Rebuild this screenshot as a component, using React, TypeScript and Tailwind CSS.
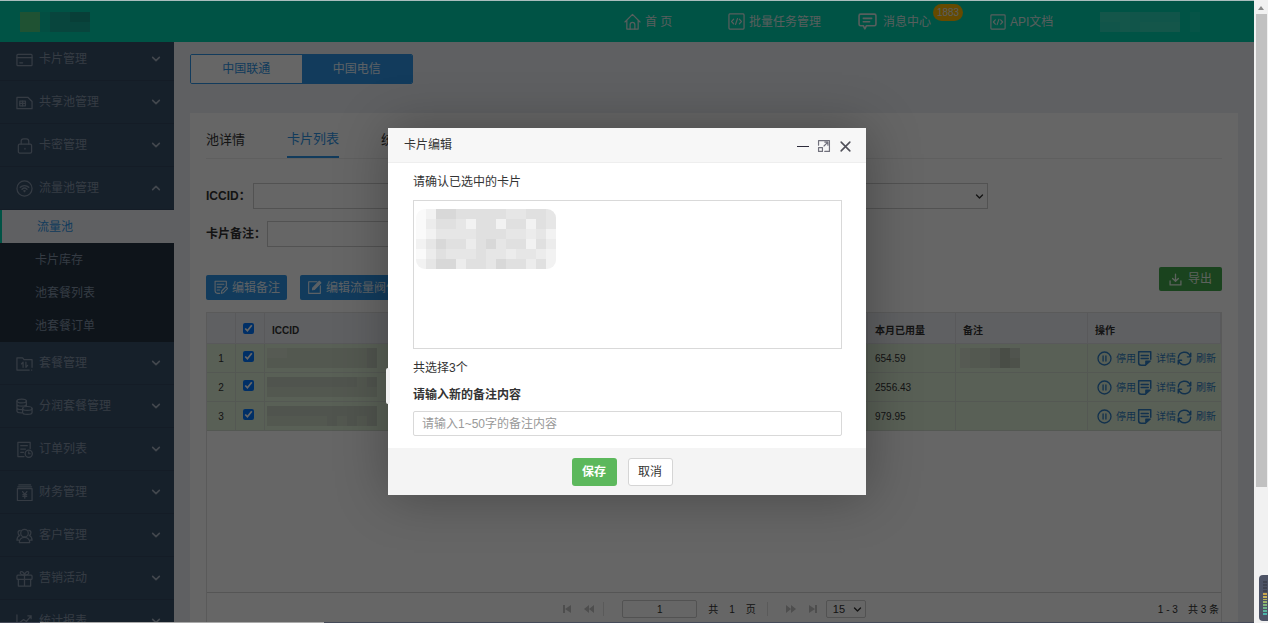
import type { ReactNode } from "react";

type IconProps = { children: ReactNode; className?: string };

function Icon({ children, className = "size-[17px]" }: IconProps) {
  return (
    <svg
      viewBox="0 0 18 18"
      fill="none"
      stroke="currentColor"
      strokeWidth="1.3"
      strokeLinecap="round"
      strokeLinejoin="round"
      aria-hidden="true"
      className={`shrink-0 ${className}`}
    >
      {children}
    </svg>
  );
}

const icons = {
  card: (
    <>
      <rect x="1" y="3.5" width="16" height="12" rx="1" />
      <path d="M1 7h16M4 12.5h3" />
    </>
  ),
  sim: (
    <>
      <path d="M1 3.5h11.5L17 8v7.5H1z" />
      <rect x="4" y="7.5" width="6" height="5" />
      <path d="M7 7.5v5M4 10h6" />
    </>
  ),
  lock: (
    <>
      <rect x="2.5" y="7.5" width="14" height="9.5" rx="1.5" />
      <path d="M5.5 7.5V4.5a2.5 2.5 0 0 1 2.5-2.5h3a2.5 2.5 0 0 1 2.5 2.5v3M9.5 12v.8" />
    </>
  ),
  wifi: (
    <>
      <circle cx="9" cy="9" r="8" />
      <path d="M4.5 7.8a6.4 6.4 0 0 1 9 0M6.4 9.8a3.7 3.7 0 0 1 5.2 0" strokeWidth="1.5" />
      <path d="M7.4 11.3a2.3 2.3 0 0 1 3.2 0L9 13.2z" fill="currentColor" stroke="none" />
    </>
  ),
  folder: (
    <>
      <path d="M17 13V5H8.5L7 3H1v13h13M16.5 16h.2" />
      <path d="M7.5 13V7.5L5.8 9.5M10.5 7.5V13l1.8-2" />
    </>
  ),
  coins: (
    <>
      <ellipse cx="6" cy="3.2" rx="5" ry="2" />
      <path d="M1 3.2v10.5c0 1.2 2 2 5 2M11 3.2v5M1 6.7c0 1.2 2 2 5 2s5-.8 5-2M1 10.2c0 1.2 2 2 5 2" />
      <ellipse cx="12" cy="11" rx="5" ry="2" />
      <path d="M7 11v4.3c0 1.2 2 2 5 2s5-.8 5-2V11" />
    </>
  ),
  order: (
    <>
      <path d="M15 8V1.5H2v15h6.5M5 5h7M5 8.5h5M5 12h3" />
      <circle cx="13.5" cy="13.5" r="3.8" />
      <path d="M13.5 11.5v2h1.5" />
    </>
  ),
  finance: (
    <>
      <rect x="1.5" y="5" width="15.5" height="12.5" />
      <path d="M3 1h12.5M2 3h14.5M7 8l2.3 3L11.5 8M9.3 11v4M7.3 11.3h4M7.3 13.2h4" />
    </>
  ),
  users: (
    <>
      <circle cx="9" cy="6.5" r="4" />
      <path d="M3.5 16.5c0-3.5 2.5-5.5 5.5-5.5s5.5 2 5.5 5.5zM4.5 3.5C1.5 3.5 1.5 8 4 9c-2 .8-3 2.500-3 5h2M13.5 3.5c3 0 3 4.500.5 5.500 2 .8 3 2.500 3 5h-2" />
    </>
  ),
  gift: (
    <>
      <rect x="1" y="5.5" width="16" height="4.5" rx="1" />
      <path d="M2.5 10v7h13v-7M9 5.5V17M9 5.5C7 5.5 4 4.5 4.5 2.5S8.5 2 9 5.5c.5-3.500 4-5 4.500-3S11 5.500 9 5.500" />
    </>
  ),
  chart: <path d="M1 2v15h16M4 14v-4l4-3 3 2 5-6M12.5 3H16v3M8 14v-2M12 14v-2M16 14v-4" />,
  home: (
    <>
      <path d="M1 9.5 9 1.5l8 8M3 8v9h12V8" />
      <path d="M6.5 17v-4.500a2.500 2.500 0 0 1 5 0V17" />
    </>
  ),
  code: (
    <>
      <rect x="1" y="1" width="16" height="16" rx="1" />
      <path d="M6 6.5 3.8 9 6 11.5M12 6.5 14.2 9 12 11.5M10 6l-2 6" />
    </>
  ),
  message: (
    <path d="M2.5 2h13a1.5 1.5 0 0 1 1.5 1.5v8a1.5 1.5 0 0 1-1.5 1.5H8l-1.5 3L5 13H2.5A1.5 1.5 0 0 1 1 11.5v-8A1.5 1.5 0 0 1 2.500 2zM5 6h8M5 9.300h6" strokeWidth="1.5" />
  ),
  note: (
    <>
      <path d="M16 7V1.5H2.5V13c0 2 1 3 3 3H8M5 5h8M5 8.5h5M5 12h3" />
      <path d="m10 16 .5-2.800L15.500 8l2 2-5 5.300z" />
    </>
  ),
  pencil: (
    <>
      <path d="M12 2H2v14h14V7" />
      <path d="m6.5 11.8.4-2.300L14.800 1.500l1.900 1.900-8 8z" fill="currentColor" />
    </>
  ),
  download: <path d="M9 1.5v9.500M5 7.500l4 4 4-4M1.500 11v5.500h15V11" strokeWidth="1.8" />,
  pause: (
    <>
      <circle cx="9" cy="9" r="7.8" strokeWidth="1.6" />
      <path d="M7.3 6v6M10.7 6v6" strokeWidth="1.6" />
    </>
  ),
  detail: (
    <>
      <path d="M16.5 10V1H2v13c0 2 1 3 3 3h5M5 5.500h8.500M5 9h8.500" strokeWidth="1.8" />
      <path d="M10.5 12H16l-5.500 5z" fill="currentColor" />
    </>
  ),
  refresh: (
    <path d="M16.5 2.500v4.500h-4M1.500 15.500V11h4M16 6.500A7.400 7.400 0 0 0 1.600 8.500M2 11.500a7.400 7.400 0 0 0 14.400-2" strokeWidth="1.7" />
  ),
  down: <path d="m3 6 6 6 6-6" strokeWidth="2.8" />,
  up: <path d="m3 12 6-6 6 6" strokeWidth="2.8" />,
  expand: (
    <>
      <path d="M2 8V2h14v14h-6M9 9l5-5M10 4h4v4" strokeWidth="1.5" />
      <rect x="2" y="11" width="5" height="5" strokeWidth="1.5" />
    </>
  ),
  close: <path d="m3 3 12 12M15 3 3 15" strokeWidth="2.2" />,
};

type MosaicProps = { rows: string[]; palette: Record<string, string>; label: string; className?: string };

/* Blocks of 10px that hide a private value; "." leaves a block empty. */
function Mosaic({ rows, palette, label, className = "" }: MosaicProps) {
  const width = rows[0].length * 10;
  const height = rows.length * 10;
  return (
    <svg width={width} height={height} role="img" aria-label={label} shapeRendering="crispEdges" className={`block shrink-0 ${className}`}>
      {rows.flatMap((row, y) =>
        row.split("").map((c, x) =>
          c === "." ? null : <rect key={`${x}-${y}`} x={x * 10} y={y * 10} width="10" height="10" fill={palette[c]} />,
        ),
      )}
    </svg>
  );
}

const greys = { a: "#fafafa", b: "#f2f2f2", c: "#ececec", d: "#e6e6e6", e: "#e0e0e0", f: "#d8d8d8" };
const greens = { a: "#d6e2d0", b: "#d0dbc9", c: "#c8d3c2", d: "#c0cbba", e: "#b6c0b0" };

const submenu = ["卡片库存", "池套餐列表", "池套餐订单"];
const menuTop = [
  { icon: icons.card, label: "卡片管理" },
  { icon: icons.sim, label: "共享池管理" },
  { icon: icons.lock, label: "卡密管理" },
  { icon: icons.wifi, label: "流量池管理", open: true },
];
const menuBottom = [
  { icon: icons.folder, label: "套餐管理" },
  { icon: icons.coins, label: "分润套餐管理" },
  { icon: icons.order, label: "订单列表" },
  { icon: icons.finance, label: "财务管理" },
  { icon: icons.users, label: "客户管理" },
  { icon: icons.gift, label: "营销活动" },
  { icon: icons.chart, label: "统计报表" },
];

function MenuItem({ icon, label, open = false }: { icon: ReactNode; label: string; open?: boolean }) {
  return (
    <li>
      <a href="#" className="flex h-[43px] items-center border-b border-[#33485f] pr-[13px] pl-4 text-xs text-[#8495a9]">
        <Icon>{icon}</Icon>
        <span className="ml-1.5 flex-1">{label}</span>
        <Icon className="size-[10px] text-[#a5b2c1]">{open ? icons.up : icons.down}</Icon>
      </a>
    </li>
  );
}

function Sidebar() {
  return (
    <nav aria-label="主菜单" className="w-[174px] shrink-0 overflow-hidden bg-[#39506a]">
      <ul className="-mt-1">
        {menuTop.map((m) => (
          <MenuItem key={m.label} {...m} />
        ))}
        <li>
          <ul className="bg-[#233241] text-xs">
            <li>
              <a href="#" className="flex h-[33px] items-center border-l-2 border-[#00cfad] bg-[#eef0f5] pl-[35px] text-[#2d94e6]">
                流量池
              </a>
            </li>
            {submenu.map((label) => (
              <li key={label}>
                <a href="#" className="flex h-[33px] items-center pl-[35px] text-[#8495a9]">
                  {label}
                </a>
              </li>
            ))}
          </ul>
        </li>
        {menuBottom.map((m) => (
          <MenuItem key={m.label} {...m} />
        ))}
      </ul>
    </nav>
  );
}

function Header() {
  return (
    <header className="flex h-[42px] shrink-0 items-center bg-[#00cfad] pt-px pl-5 text-xs text-[#dcebe8]">
      <Mosaic label="标志" rows={["aabccdd", "aabcccc"]} palette={{ a: "#4fcc80", b: "#08c2a6", c: "#15ad98", d: "#159f8d" }} />
      <nav aria-label="顶部导航" className="ml-auto flex items-center pr-[54px]">
        <a href="#" className="flex w-[104px] items-center gap-1">
          <Icon>{icons.home}</Icon>首 页
        </a>
        <a href="#" className="flex w-[130px] items-center gap-1">
          <Icon>{icons.code}</Icon>批量任务管理
        </a>
        <a href="#" className="relative flex w-[132px] items-center gap-1.5">
          <Icon className="size-[19px]">{icons.message}</Icon>消息中心
          <span className="absolute -top-2 left-[75px] flex h-[17px] w-[30px] items-center justify-center rounded-full bg-[#ffb800] text-[10px]">
            1883
          </span>
        </a>
        <a href="#" className="flex w-[110px] items-center gap-1">
          <Icon className="size-4">{icons.code}</Icon>API文档
        </a>
        <Mosaic label="账号" rows={["aaabbbbb.d", "bbabaaaa.d"]} palette={{ a: "#32d6ba", b: "#2bd5b8", d: "#10d2b1" }} />
      </nav>
    </header>
  );
}

const usage = ["654.59", "2556.43", "979.95"];
const idBlocks = [
  ["aabbbbbbbbc", "bbbbbbbbbbc"],
  ["cccccccccbc", "bbbbbbbbbbb"],
  ["ccccccccccc", "bbbbbbcbcbc"],
];
const actions = [
  { icon: icons.pause, label: "停用" },
  { icon: icons.detail, label: "详情" },
  { icon: icons.refresh, label: "刷新" },
];

function CardTable() {
  const head = "border-r border-b border-[#dedfe3] px-[7px] pt-1 text-left font-bold";
  const cell = "border-r border-b border-[#d3dccf] px-[7px]";
  return (
    <table className="w-full table-fixed border-separate border-spacing-0 text-[10px] text-[#333]">
      <colgroup>
        <col className="w-[29px]" />
        <col className="w-[29px]" />
        <col />
        <col className="w-[88px]" />
        <col className="w-[132px]" />
        <col className="w-[133px]" />
      </colgroup>
      <thead>
        <tr className="h-[31px] bg-[#eef0f5]">
          <th className={head} aria-label="序号" />
          <th className="border-r border-b border-[#dedfe3] px-[7px]">
            <input type="checkbox" defaultChecked aria-label="全选" className="block size-[11px]" />
          </th>
          <th className={head}>ICCID</th>
          <th className={head}>本月已用量</th>
          <th className={head}>备注</th>
          <th className={head}>操作</th>
        </tr>
      </thead>
      <tbody>
        {usage.map((value, i) => (
          <tr key={value} className="h-[29px] bg-[#dff0d8]">
            <td className={`${cell} text-center`}>{i + 1}</td>
            <td className="border-r border-b border-[#d3dccf] px-[7px] pb-1">
              <input type="checkbox" defaultChecked aria-label={`选择第${i + 1}行`} className="block size-[11px]" />
            </td>
            <td className="border-r border-b border-[#d3dccf] px-0.5">
              <Mosaic label="ICCID" rows={idBlocks[i]} palette={greens} />
            </td>
            <td className={cell}>{value}</td>
            <td className="border-r border-b border-[#d3dccf] px-1">
              {i === 0 && <Mosaic label="备注" rows={["abbcec", "abbced"]} palette={greens} />}
            </td>
            <td className="border-b border-[#d3dccf] pl-[9px]">
              <div className="flex">
                {actions.map((a) => (
                  <a key={a.label} href="#" className="flex w-10 shrink-0 items-center gap-1 whitespace-nowrap text-[#2f7cc0]">
                    <Icon className="size-[15px]">{a.icon}</Icon>
                    {a.label}
                  </a>
                ))}
              </div>
            </td>
          </tr>
        ))}
      </tbody>
    </table>
  );
}

function PagerArrow({ label, path }: { label: string; path: string }) {
  return (
    <button type="button" aria-label={label} className="text-[#c2c2c2]">
      <svg viewBox="0 0 10 10" className="size-[10px]" fill="currentColor" aria-hidden="true">
        <path d={path} />
      </svg>
    </button>
  );
}

function Pager() {
  return (
    <div className="relative flex h-[31px] shrink-0 items-center justify-center border-t border-[#d5d5d5] pt-0.5 text-[10px] text-[#333]">
      <div className="flex items-center">
        <div className="flex gap-3">
          <PagerArrow label="首页" path="M1 1h2v8H1zM9 1v8L3 5z" />
          <PagerArrow label="上一页" path="M5 1v8L0 5zM10 1v8L5 5z" />
        </div>
        <span className="mr-[18px] ml-[9px] h-[14px] border-l border-[#e2e2e2]" />
        <input aria-label="页码" defaultValue="1" className="h-[18px] w-[75px] rounded-xs border border-[#ccc] text-center" />
        <span className="ml-[11px] flex gap-[11px]">
          <span>共</span>
          <span>1</span>
          <span>页</span>
        </span>
        <span className="mr-[18px] ml-[11px] h-[14px] border-l border-[#e2e2e2]" />
        <div className="mr-2 flex gap-3">
          <PagerArrow label="下一页" path="M0 1v8l5-4zM5 1v8l5-4z" />
          <PagerArrow label="末页" path="M7 1h2v8H7zM1 1v8l6-4z" />
        </div>
        <div className="relative flex items-center">
          <select aria-label="每页条数" className="h-[18px] w-10 appearance-none rounded-xs border border-[#ccc] pl-1.5 text-[11px]">
            <option>15</option>
          </select>
          <Icon className="pointer-events-none absolute right-1 size-[9px]">{icons.down}</Icon>
        </div>
      </div>
      <span className="absolute right-0.5 flex gap-2.5">
        <span>1 - 3</span>
        <span>共 3 条</span>
      </span>
    </div>
  );
}

function Content() {
  const field = "h-[26px] border border-[#ccc] bg-white";
  const blue = "flex h-[25px] items-center gap-1 rounded-xs bg-[#2d94e6] px-[7px] text-xs whitespace-nowrap text-[#e6f2fc]";
  return (
    <main className="flex min-w-0 flex-1 flex-col bg-[#eef0f5] px-4 pt-3">
      <div className="flex h-[30px] w-[223px] shrink-0 overflow-hidden rounded-xs border border-[#2d94e6] text-xs">
        <button type="button" className="flex-1 bg-white text-[#2d94e6]">中国联通</button>
        <button type="button" className="flex-1 bg-[#2d94e6] text-[#e6f2fc]">中国电信</button>
      </div>
      <section className="mt-[29px] flex min-h-0 flex-1 flex-col bg-white px-4">
        <nav aria-label="流量池" className="flex h-[46px] shrink-0 gap-[42px] border-b border-[#eee] pt-2 text-[13px] text-[#333]">
          <a href="#" className="flex items-center">池详情</a>
          <a href="#" className="flex items-center border-b-2 border-[#2d94e6] text-[#2d94e6]">卡片列表</a>
          <a href="#" className="flex items-center">统计</a>
        </nav>
        <form className="mt-6 text-xs font-bold text-[#333]">
          <div className="flex items-center">
            <label htmlFor="iccid" className="w-[47px]">ICCID：</label>
            <input id="iccid" className={`${field} w-[300px]`} />
            <div className="relative ml-[134px] flex w-[301px] items-center">
              <select aria-label="状态" className={`${field} w-full appearance-none`} />
              <Icon className="pointer-events-none absolute right-1 size-[9px]">{icons.down}</Icon>
            </div>
          </div>
          <div className="mt-3 flex items-center">
            <label htmlFor="remark" className="w-[61px]">卡片备注：</label>
            <input id="remark" className={`${field} w-[286px]`} />
          </div>
        </form>
        <div className="mt-5 flex h-[45px] shrink-0 items-start">
          <div className="mt-2 flex gap-[13px]">
            <button type="button" className={blue}>
              <Icon className="size-[15px]">{icons.note}</Icon>编辑备注
            </button>
            <button type="button" className={blue}>
              <Icon className="size-[15px]">{icons.pencil}</Icon>编辑流量阀值
            </button>
          </div>
          <button type="button" className="ml-auto flex h-6 items-center gap-1.5 rounded-xs bg-[#41a84b] px-2.5 text-xs text-[#e6f5e8]">
            <Icon className="size-[13px]">{icons.download}</Icon>导出
          </button>
        </div>
        <div className="flex min-h-0 flex-1 flex-col border border-b-0 border-[#e2e2e2]">
          <div className="min-h-0 flex-1 overflow-hidden">
            <CardTable />
          </div>
          <Pager />
        </div>
      </section>
    </main>
  );
}

const selectedBlocks = [
  "abffeeeeeddeed",
  "aceedbeebeebed",
  "abddddeeeddcdb",
  "bdfeecefdeebec",
  "acedddeddcddcb",
  "bdffceedfeeceb",
];

function EditDialog() {
  return (
    <div role="dialog" aria-labelledby="dialog-title" className="relative w-[478px] bg-white text-xs text-[#333] shadow-[1px_1px_50px_rgba(0,0,0,0.3)]">
      <span className="absolute top-[240px] -left-0.5 h-9 w-1 rounded-xs bg-[#f2f2f2]" />
      <div className="flex h-[35px] items-center border-b border-[#eee] bg-[#f7f7f7] pr-[14px] pl-4">
        <h2 id="dialog-title" className="flex-1">卡片编辑</h2>
        <div className="flex items-center gap-2 pt-0.5 text-[#2d2c3b]">
          <button type="button" aria-label="最小化" className="flex h-3.5 w-3 items-center">
            <span className="w-full border-t border-[#2d2c3b]" />
          </button>
          <button type="button" aria-label="最大化" className="text-[#71717c]">
            <Icon className="block size-[14px]">{icons.expand}</Icon>
          </button>
          <button type="button" aria-label="关闭" className="text-[#505059]">
            <Icon className="block size-[13px]">{icons.close}</Icon>
          </button>
        </div>
      </div>
      <div className="pt-[10px] pr-6 pb-3 pl-[25px]">
        <label htmlFor="selected" className="block leading-[18px]">请确认已选中的卡片</label>
        <div className="relative mt-[9px]">
          <textarea id="selected" readOnly className="block h-[149px] w-full resize-none border border-[#d9d9d9] outline-none" />
          <Mosaic label="已选卡片" rows={selectedBlocks} palette={greys} className="absolute top-[9px] left-[3px] rounded-[9px]" />
        </div>
        <p className="mt-[10px] leading-[18px]">共选择3个</p>
        <label htmlFor="new-remark" className="mt-[9px] block leading-[18px] font-bold">请输入新的备注内容</label>
        <input
          id="new-remark"
          placeholder="请输入1~50字的备注内容"
          className="mt-[7px] block h-[25px] w-full rounded-xs border border-[#d9d9d9] px-2 outline-none placeholder:text-[#999]"
        />
      </div>
      <div className="flex h-[47px] items-center justify-center gap-[11px] bg-[#f4f4f4] pr-[10px]">
        <button type="button" className="h-7 w-[45px] rounded-[3px] bg-[#5cb85c] font-bold text-white">保存</button>
        <button type="button" className="h-7 w-[45px] rounded-[3px] border border-[#d5d5d5] bg-white">取消</button>
      </div>
    </div>
  );
}

const meter = ["#3f4350", "#3f4350", "#3f4350", "#3f4350", "#c9a64f", "#c9b25a", "#b3b45f", "#9cb568", "#84b577", "#6fb489", "#5cb59d", "#4bb5ac"];

function ScrollBar() {
  return (
    <div aria-hidden="true" className="relative flex w-[14px] shrink-0 flex-col items-center bg-[#f1f1f1]">
      <svg viewBox="0 0 14 14" className="h-[14px] w-[14px] shrink-0" fill="#8a8a8a">
        <path d="M4 10 7 6l3 4z" />
      </svg>
      <div className="h-[76%] w-[11px] bg-[#c1c1c1]" />
      <div className="absolute right-0 bottom-0.5 flex h-[46px] w-[9px] flex-col gap-px rounded-l-sm bg-[#4d5365] py-1.5 pr-px pl-1">
        {meter.map((colour, i) => (
          <span key={i} className="h-0.5" style={{ backgroundColor: colour }} />
        ))}
      </div>
    </div>
  );
}

export default function App() {
  return (
    <div className="flex h-screen overflow-hidden font-['Liberation_Sans','Noto_Sans_CJK_SC',sans-serif]">
      <div className="relative flex min-w-0 flex-1 flex-col">
        <Header />
        <div className="flex min-h-0 flex-1">
          <Sidebar />
          <Content />
        </div>
        <div className="absolute inset-0 flex items-center justify-center bg-black/60 shadow-[inset_0_1px_#a9bdbd]">
          <EditDialog />
        </div>
        <div className="absolute inset-x-0 bottom-0 h-px bg-[#454a58] pl-10">
          <div className="h-px w-[284px] bg-[#aaa]" />
        </div>
      </div>
      <ScrollBar />
    </div>
  );
}
